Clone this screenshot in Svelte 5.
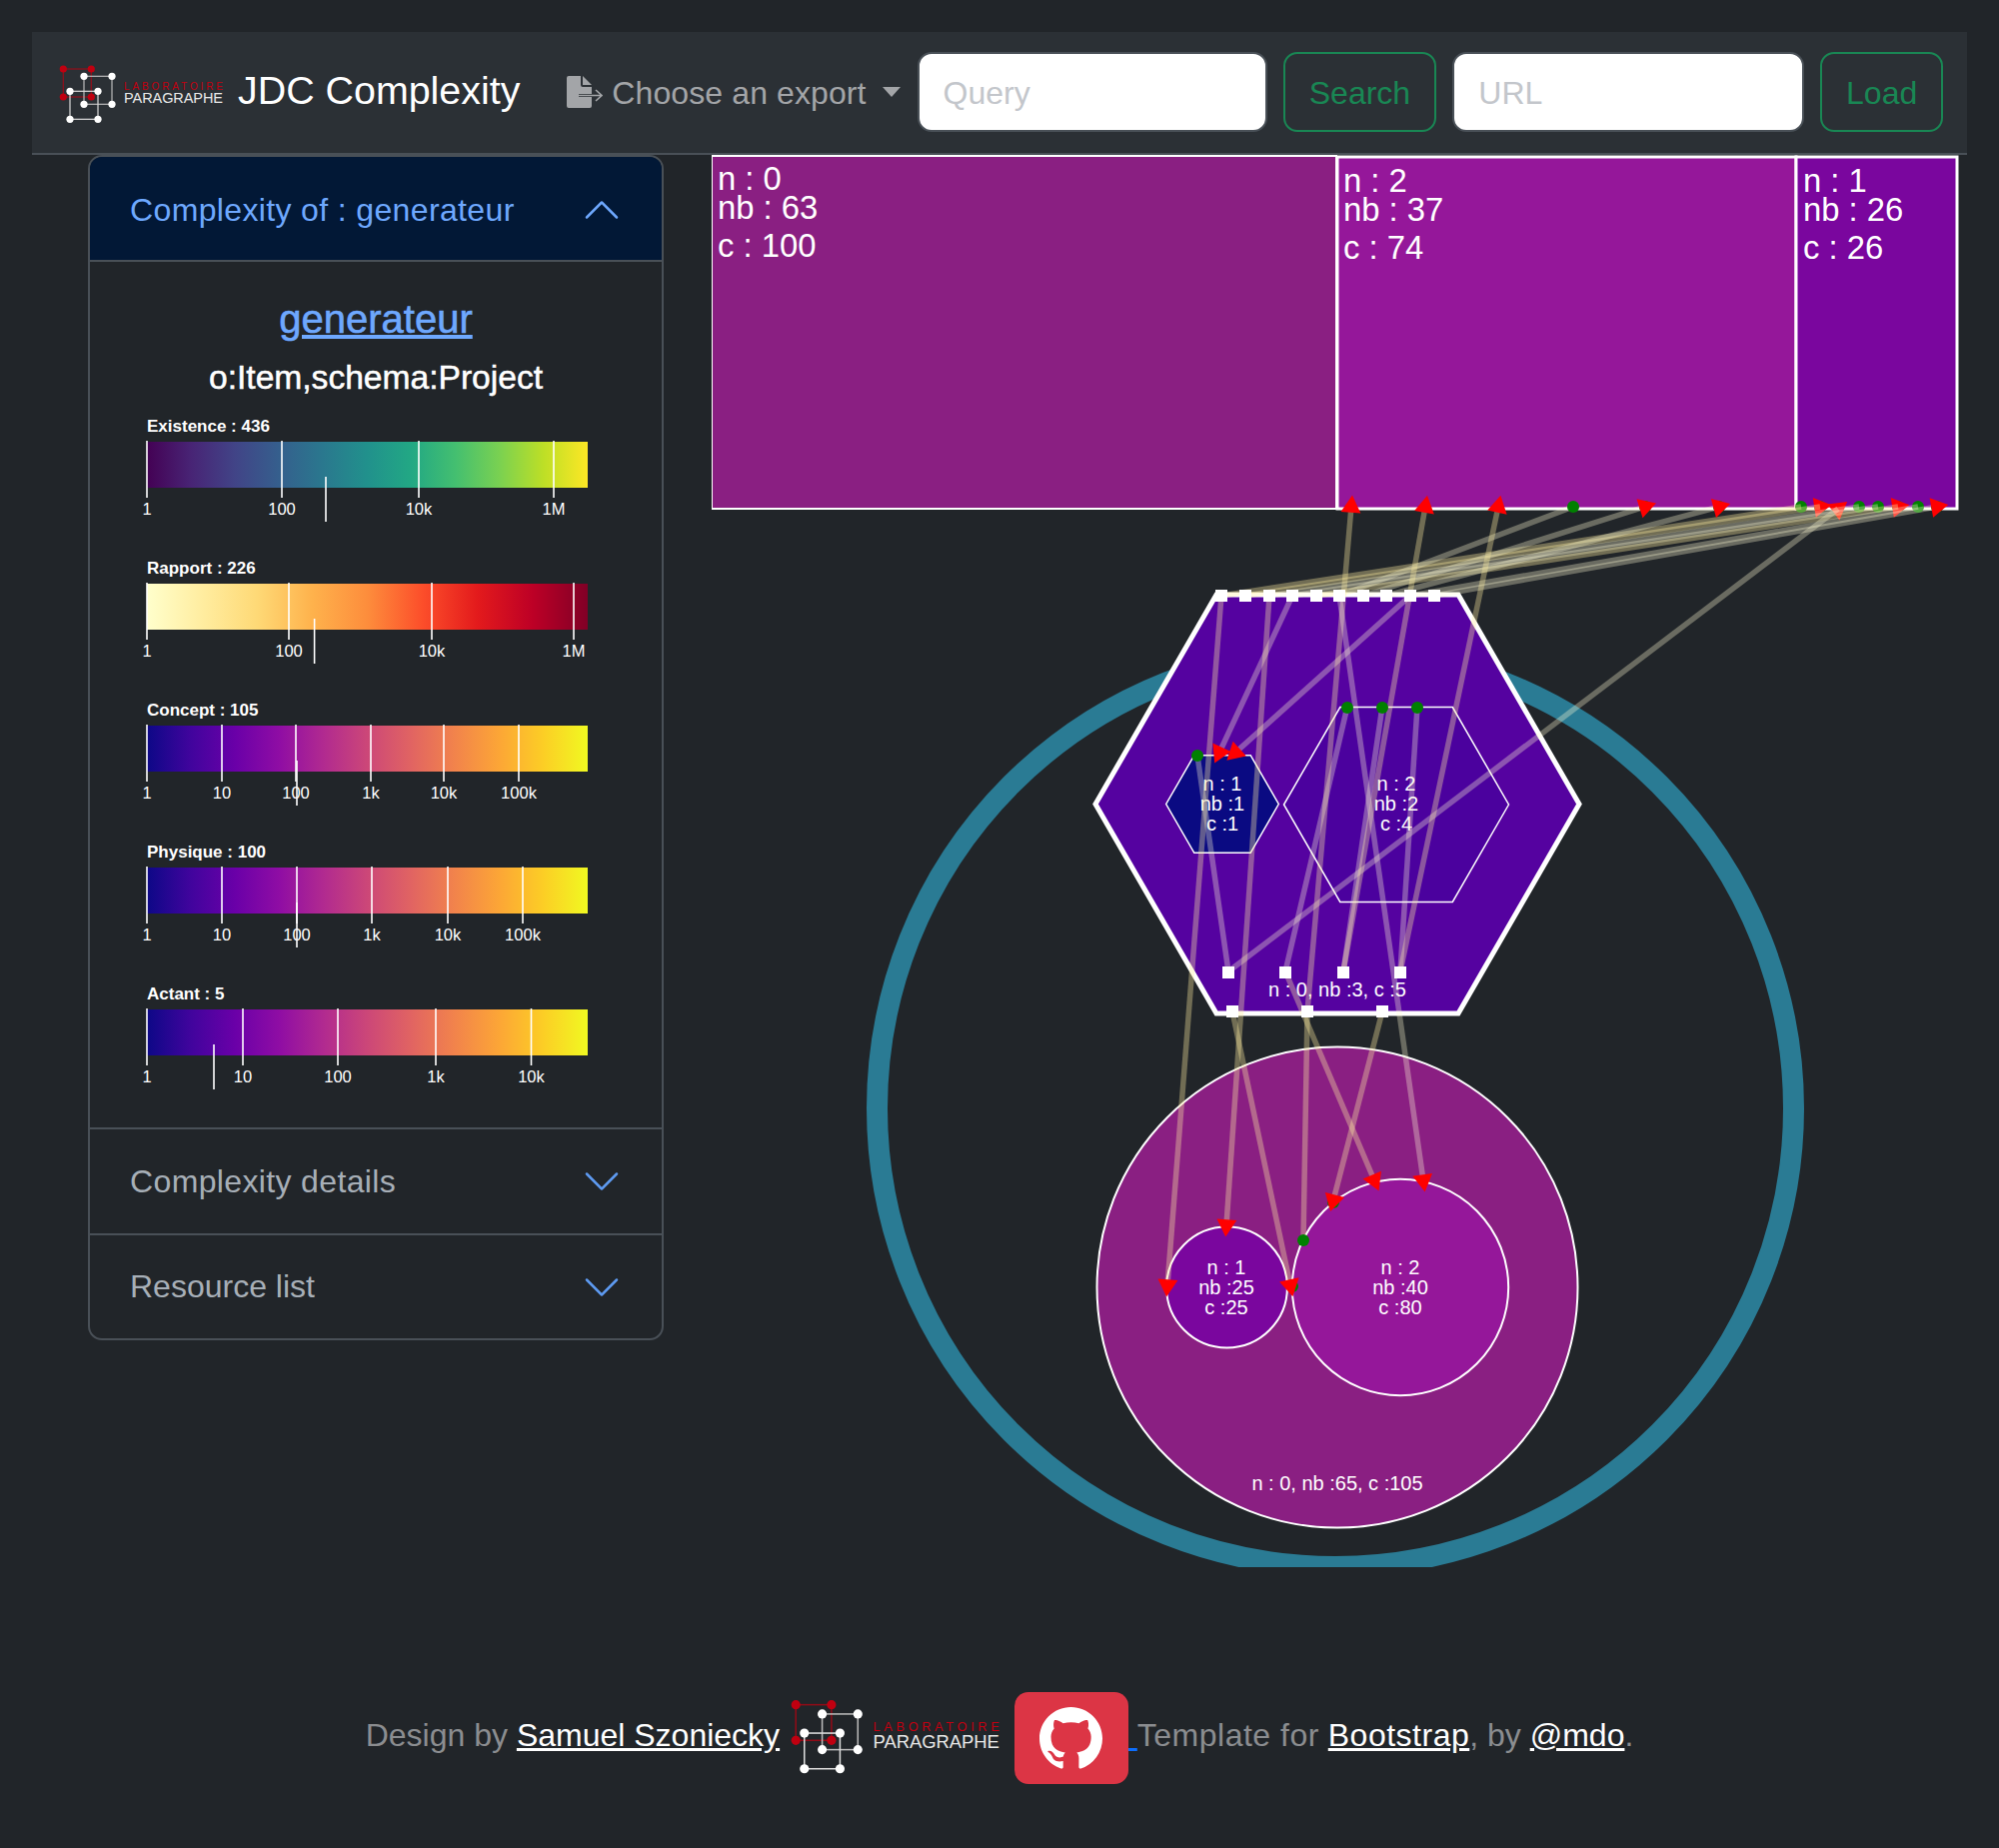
<script>
	const red = '#c00010';

	const legends = [
		{ title: 'Existence : 436', grad: 'viridis', mark: 326, ticks: [[147, '1'], [282, '100'], [419, '10k'], [554, '1M']] },
		{ title: 'Rapport : 226', grad: 'ylorrd', mark: 314.6, ticks: [[147, '1'], [289, '100'], [432, '10k'], [574, '1M']] },
		{ title: 'Concept : 105', grad: 'plasma', mark: 297, ticks: [[147, '1'], [222, '10'], [296, '100'], [371, '1k'], [444, '10k'], [519, '100k']] },
		{ title: 'Physique : 100', grad: 'plasma', mark: 297, ticks: [[147, '1'], [222, '10'], [297, '100'], [372, '1k'], [448, '10k'], [523, '100k']] },
		{ title: 'Actant : 5', grad: 'plasma', mark: 214, ticks: [[147, '1'], [243, '10'], [338, '100'], [436, '1k'], [531.5, '10k']] }
	];

	const gradients = {
		viridis: ['#440154', '#482475', '#414487', '#355f8d', '#2a788e', '#21918c', '#22a884', '#44bf70', '#7ad151', '#bddf26', '#fde725'],
		ylorrd: ['#ffffcc', '#ffeda0', '#fed976', '#feb24c', '#fd8d3c', '#fc4e2a', '#e31a1c', '#bd0026', '#800026'],
		plasma: ['#0d0887', '#41049d', '#6a00a8', '#8f0da4', '#b12a90', '#cc4778', '#e16462', '#f2844b', '#fca636', '#fcce25', '#f0f921']
	};

	const rects = [
		{ x: 712, y: 156, w: 625, h: 353, fill: '#8a1f82', sw: 2, tx: 718, base: 190, lines: ['n : 0', 'nb : 63', 'c : 100'] },
		{ x: 1338, y: 157, w: 459, h: 352, fill: '#95179a', sw: 3, tx: 1344, base: 192, lines: ['n : 2', 'nb : 37', 'c : 74'] },
		{ x: 1797, y: 157, w: 161, h: 352, fill: '#7a069e', sw: 3, tx: 1804, base: 192, lines: ['n : 1', 'nb : 26', 'c : 26'] }
	];

	const links = [
		// fan from the top of the hexagon to the treemap
		[1222, 596, 1802, 507, 1], [1246, 596, 1821, 507, 1], [1270, 596, 1860, 507, 0], [1293, 596, 1879, 507, 0],
		[1317, 596, 1899, 507, 1], [1411, 596, 1919, 507, 0], [1435, 596, 1938, 507, 0], [1340, 596, 1574, 507, 0],
		[1364, 596, 1646, 507, 0], [1387, 596, 1720, 507, 0],
		// through the hexagon
		[1229, 972, 1839, 509, 0], [1229, 972, 1198, 756, 0], [1293, 596, 1220, 753, 0], [1411, 596, 1236, 753, 0],
		[1286, 972, 1348, 707, 0], [1344, 972, 1383, 707, 0], [1401, 972, 1418, 707, 0],
		[1308, 1012, 1352, 507, 1], [1344, 972, 1426, 507, 1], [1401, 972, 1499, 507, 1],
		// down to the circles
		[1222, 596, 1168, 1286, 1], [1270, 596, 1227, 1226, 1], [1233, 1012, 1291, 1286, 1], [1308, 1012, 1304, 1241, 1],
		[1286, 972, 1375, 1181, 1], [1383, 1012, 1334, 1201, 1], [1340, 596, 1424, 1181, 0]
	];

	const lowDots = [1802, 1821, 1860, 1879, 1899, 1919];
	const highDots = [[1574, 507], [1646, 507], [1720, 507], [1938, 507], [1198, 756], [1348, 708], [1383, 708], [1418, 708], [1304, 1241], [1334, 1203], [1293, 1287]];

	const lowArrows = [[1821, 507, 1246, 596], [1899, 507, 1317, 596], [1839, 509, 1229, 972]];
	const highArrows = [
		[1352, 507, 1308, 1012], [1426, 507, 1344, 972], [1499, 507, 1401, 972], [1646, 507, 1364, 596], [1720, 507, 1387, 596], [1938, 507, 1435, 596],
		[1220, 753, 1293, 596], [1236, 753, 1411, 596],
		[1168, 1286, 1222, 596], [1227, 1226, 1270, 596], [1291, 1286, 1233, 1012], [1334, 1201, 1383, 1012], [1375, 1181, 1286, 972], [1424, 1181, 1340, 596]
	];

	const topPorts = [1222, 1246, 1270, 1293, 1317, 1340, 1364, 1387, 1411, 1435].map((x) => [x, 596]);
	const midPorts = [1229, 1286, 1344, 1401].map((x) => [x, 973]);
	const lowPorts = [1233, 1308, 1383].map((x) => [x, 1012]);

	function hex(cx, cy, r) {
		const pts = [];
		for (let i = 0; i < 6; i++) {
			const a = (i * Math.PI) / 3;
			pts.push((cx + r * Math.cos(a)).toFixed(1) + ',' + (cy + r * Math.sin(a)).toFixed(1));
		}
		return pts.join(' ');
	}

	// arrow head centred on its port, tip pointing away from where the link comes from
	function arrow(x, y, fromX, fromY) {
		const dir = Math.atan2(y - fromY, x - fromX);
		const pts = [];
		for (let i = 0; i < 3; i++) {
			const a = dir + (i * 2 * Math.PI) / 3;
			pts.push((x + 11.5 * Math.cos(a)).toFixed(1) + ',' + (y + 11.5 * Math.sin(a)).toFixed(1));
		}
		return pts.join(' ');
	}
</script>

{#snippet logo(cls)}
	<svg class={cls} viewBox="58 64 168 62" aria-label="Laboratoire Paragraphe">
		<g fill="none" stroke-width="1.2">
			<rect x="63.3" y="70" width="28" height="28" stroke={red} opacity="0.7" />
			<rect x="84" y="77.3" width="28" height="28" stroke="#bbb" />
			<rect x="70" y="92.3" width="28" height="28" stroke="#ddd" />
		</g>
		<g fill={red}>
			<circle cx="63.3" cy="70" r="3.6" /><circle cx="91.3" cy="70" r="3.6" />
			<circle cx="63.3" cy="98" r="3.6" /><circle cx="91.3" cy="98" r="3.6" />
		</g>
		<g fill="#fff">
			<circle cx="84" cy="77.3" r="3.6" /><circle cx="112" cy="77.3" r="3.6" />
			<circle cx="84" cy="105.3" r="3.6" /><circle cx="112" cy="105.3" r="3.6" />
			<circle cx="70" cy="92.3" r="3.6" /><circle cx="98" cy="92.3" r="3.6" />
			<circle cx="70" cy="120.3" r="3.6" /><circle cx="98" cy="120.3" r="3.6" />
		</g>
		<text x="124" y="91" class="logo-top" textLength="99">LABORATOIRE</text>
		<text x="124" y="104" class="logo-bottom" textLength="99">PARAGRAPHE</text>
	</svg>
{/snippet}

{#snippet chevron(up)}
	<svg class="chevron" class:up viewBox="0 0 16 16" fill="currentColor">
		<path d="M1.646 4.646a.5.5 0 0 1 .708 0L8 10.293l5.646-5.647a.5.5 0 0 1 .708.708l-6 6a.5.5 0 0 1-.708 0l-6-6a.5.5 0 0 1 0-.708z" />
	</svg>
{/snippet}

<nav class="navbar">
	{@render logo('nav-logo')}
	<span class="brand">JDC Complexity</span>
	<button class="export">
		<svg class="export-icon" viewBox="0 0 36 32">
			<path fill="currentColor" d="M2 0h12v9a2 2 0 0 0 2 2h9v7H12v3h13v9a2 2 0 0 1-2 2H2a2 2 0 0 1-2-2V2a2 2 0 0 1 2-2z" />
			<path fill="currentColor" d="M16 0l9 9h-9z" />
			<path fill="none" stroke="currentColor" stroke-width="1.6" d="M12 19.5h22M29 14l6 5.5-6 5.5" />
		</svg>
		<span class="export-label">Choose an export</span>
	</button>
	<input class="field query" placeholder="Query" />
	<button class="btn search">Search</button>
	<input class="field url" placeholder="URL" />
	<button class="btn load">Load</button>
</nav>

<main class="main">
	<section class="accordion">
		<button class="acc-head open">
			<span class="wide">Complexity of : generateur</span>
			{@render chevron(true)}
		</button>
		<div class="acc-body">
			<h4 class="res-title"><a href="#top">generateur</a></h4>
			<p class="res-types">o:Item,schema:Project</p>
			{#each legends as l, i}
				<svg class="legend" viewBox="137 0 470 142">
					<defs>
						<linearGradient id="grad{i}">
							{#each gradients[l.grad] as c, k}
								<stop offset={k / (gradients[l.grad].length - 1)} stop-color={c} />
							{/each}
						</linearGradient>
					</defs>
					<text x="147" y="27" class="leg-title">{l.title}</text>
					<rect x="147" y="37" width="441" height="46" fill="url(#grad{i})" />
					{#each l.ticks as t}
						<line x1={t[0]} x2={t[0]} y1="36" y2="93" class="tick" />
						<text x={t[0]} y="110" class="tick-label">{t[1]}</text>
					{/each}
					<line x1={l.mark} x2={l.mark} y1="72" y2="117" class="tick" />
				</svg>
			{/each}
		</div>
		<button class="acc-head middle">
			<span class="wide">Complexity details</span>
			{@render chevron(false)}
		</button>
		<button class="acc-head last">
			Resource list
			{@render chevron(false)}
		</button>
	</section>

	<svg class="diagram" viewBox="712 155 1248 1413">
		{#each rects as r}
			<rect x={r.x} y={r.y} width={r.w} height={r.h} fill={r.fill} stroke="#fff" stroke-width={r.sw} />
			<text x={r.tx} y={r.base} class="big">{r.lines[0]}</text>
			<text x={r.tx} y={r.base + 29} class="big">{r.lines[1]}</text>
			<text x={r.tx} y={r.base + 67} class="big">{r.lines[2]}</text>
		{/each}
		{#each lowDots as x}
			<circle cx={x} cy="507" r="6" class="dot" />
		{/each}
		{#each lowArrows as a}
			<polygon points={arrow(a[0], a[1], a[2], a[3])} class="head" />
		{/each}

		<circle cx="1336" cy="1109" r="458.5" class="ring" />

		<polygon points={hex(1338, 804.5, 242)} fill="#5502a0" stroke="#fff" stroke-width="5" />
		<polygon points={hex(1223, 804.5, 56.3)} fill="#0a0a82" stroke="#fff" stroke-width="1.5" />
		<polygon points={hex(1397, 805, 112.5)} fill="#4b019e" stroke="#fff" stroke-width="1.5" />
		<text x="1223" class="small" y="791">n : 1</text>
		<text x="1223" class="small" y="811">nb :1</text>
		<text x="1223" class="small" y="831">c :1</text>
		<text x="1397" class="small" y="791">n : 2</text>
		<text x="1397" class="small" y="811">nb :2</text>
		<text x="1397" class="small" y="831">c :4</text>
		<text x="1338" class="small" y="997">n : 0, nb :3, c :5</text>

		<circle cx="1338" cy="1288" r="240.5" fill="#8a1f82" stroke="#fff" stroke-width="2" />
		<circle cx="1227.5" cy="1288" r="60.4" fill="#7a069e" stroke="#fff" stroke-width="2" />
		<circle cx="1401" cy="1288" r="108.2" fill="#95179a" stroke="#fff" stroke-width="2" />
		<text x="1227" class="small" y="1275">n : 1</text>
		<text x="1227" class="small" y="1295">nb :25</text>
		<text x="1227" class="small" y="1315">c :25</text>
		<text x="1401" class="small" y="1275">n : 2</text>
		<text x="1401" class="small" y="1295">nb :40</text>
		<text x="1401" class="small" y="1315">c :80</text>
		<text x="1338" class="small" y="1491">n : 0, nb :65, c :105</text>

		{#each links as k}
			<line x1={k[0]} y1={k[1]} x2={k[2]} y2={k[3]} class="link" class:warm={k[4]} />
		{/each}

		{#each [...topPorts, ...midPorts, ...lowPorts] as p}
			<rect x={p[0] - 6} y={p[1] - 6} width="12" height="12" fill="#fff" />
		{/each}
		{#each highDots as d}
			<circle cx={d[0]} cy={d[1]} r="6" class="dot" />
		{/each}
		{#each highArrows as a}
			<polygon points={arrow(a[0], a[1], a[2], a[3])} class="head" />
		{/each}
	</svg>
</main>

<footer class="footer">
	<p>
		Design by <a class="plain" href="#top">Samuel Szoniecky</a>
		<a class="plain" href="#top">{@render logo('foot-logo')}</a>
		<a class="gh-link" href="#top">{' '}<span class="gh">
				<svg viewBox="0 0 16 16" fill="#fff">
					<path d="M8 0C3.58 0 0 3.58 0 8c0 3.54 2.29 6.53 5.47 7.59.4.07.55-.17.55-.38 0-.19-.01-.82-.01-1.49-2.01.37-2.53-.49-2.69-.94-.09-.23-.48-.94-.82-1.13-.28-.15-.68-.52-.01-.53.63-.01 1.08.58 1.23.82.72 1.21 1.87.87 2.33.66.07-.52.28-.87.51-1.07-1.78-.2-3.64-.89-3.64-3.95 0-.87.31-1.59.82-2.15-.08-.2-.36-1.02.08-2.12 0 0 .67-.21 2.2.82.64-.18 1.32-.27 2-.27.68 0 1.36.09 2 .27 1.53-1.04 2.2-.82 2.2-.82.44 1.1.16 1.92.08 2.12.51.56.82 1.27.82 2.15 0 3.07-1.87 3.75-3.65 3.95.29.25.54.73.54 1.48 0 1.07-.01 1.93-.01 2.2 0 .21.15.46.55.38A8.013 8.013 0 0016 8c0-4.42-3.58-8-8-8z" />
				</svg>
			</span>{' '}</a><span class="spread">Template for</span> <a class="plain spread" href="#top">Bootstrap</a>, by <a class="plain" href="#top">@mdo</a>.
	</p>
</footer>

<style>
	:global(body) {
		background: #212529;
		font-family: 'Liberation Sans', Arial, sans-serif;
		color: #fff;
	}

	button,
	input {
		font-family: inherit;
		font-size: 32px;
	}

	.navbar {
		box-sizing: border-box;
		display: flex;
		align-items: center;
		height: 123px;
		margin: 32px 32px 0;
		padding: 0 24px 2px 26px;
		background: #2b3035;
		border-bottom: 2px solid #495057;
	}

	.nav-logo {
		width: 168px;
		height: 62px;
		flex: none;
		margin-top: 4px;
	}

	.brand {
		margin: -2px 0 0 12px;
		font-size: 39.4px;
		white-space: nowrap;
	}

	.export {
		display: flex;
		align-items: center;
		margin-left: 47px;
		padding: 0;
		width: 351px;
		background: none;
		border: 0;
		color: #a3a5a8;
		white-space: nowrap;
	}

	.export::after {
		content: '';
		margin-left: 16px;
		border-top: 10px solid currentColor;
		border-left: 9px solid transparent;
		border-right: 9px solid transparent;
	}

	.export-icon {
		width: 36px;
		height: 32px;
		margin-right: 9px;
	}

	.export-label {
		padding-top: 4px;
		letter-spacing: 0.1px;
	}

	.field {
		box-sizing: border-box;
		height: 80px;
		padding: 4px 24px 0;
		background: #fff;
		border: 2px solid #495057;
		border-radius: 14px;
		outline: none;
	}

	.field::placeholder {
		color: #c3c6cb;
		opacity: 1;
	}

	.query {
		width: 350px;
	}

	.url {
		width: 352px;
	}

	.btn {
		height: 80px;
		padding: 4px 0 0;
		background: none;
		border: 2px solid #198754;
		border-radius: 14px;
		color: #198754;
	}

	.search {
		width: 154px;
		margin: 0 16px 0 16px;
	}

	.load {
		width: 123px;
		margin-left: 16px;
	}

	.main {
		display: flex;
		align-items: flex-start;
	}

	.accordion {
		box-sizing: border-box;
		width: 576px;
		margin-left: 88px;
		border: 2px solid #495057;
		border-radius: 14px;
		overflow: hidden;
		display: flex;
		flex-direction: column;
	}

	.acc-head {
		display: flex;
		align-items: center;
		justify-content: space-between;
		height: 105px;
		padding: 0 40px;
		background: none;
		border: 0;
		border-top: 2px solid #495057;
		color: #a7afb7;
		text-align: left;
	}

	.acc-head.open {
		height: 105px;
		padding-top: 3px;
		border-top: 0;
		border-bottom: 2px solid #495057;
		background: #021836;
		color: #6ea8fe;
	}

	.acc-head.middle {
		height: 106px;
	}

	.wide {
		letter-spacing: 0.36px;
	}

	.chevron {
		width: 40px;
		height: 40px;
		color: #5e9bf2;
	}

	.chevron.up {
		transform: rotate(180deg);
		color: #6ea8fe;
	}

	.acc-body {
		padding-top: 33px;
		height: 833px;
		box-sizing: content-box;
		text-align: center;
	}

	.res-title {
		margin: 0;
		font-size: 40px;
		line-height: 48px;
		font-weight: 400;
		-webkit-text-stroke: 0.6px #6ea8fe;
	}

	.res-title a {
		color: #6ea8fe;
	}

	.res-types {
		margin: 16px 0 8px;
		font-size: 33.6px;
		line-height: 38px;
		-webkit-text-stroke: 0.5px #fff;
	}

	.legend {
		display: block;
		width: 470px;
		height: 142px;
		margin-left: 47px;
	}

	.leg-title {
		font-size: 17px;
		font-weight: 700;
		fill: #fff;
	}

	.tick {
		stroke: #fff;
		stroke-width: 1.6;
	}

	.tick-label {
		font-size: 16.5px;
		fill: #fff;
		text-anchor: middle;
	}

	.diagram {
		display: block;
		width: 1248px;
		height: 1413px;
		margin-left: 48px;
		flex: none;
	}

	.big {
		font-size: 32.8px;
		fill: #fff;
	}

	.small {
		font-size: 20px;
		fill: #fff;
		text-anchor: middle;
	}

	.ring {
		fill: none;
		stroke: #2a7b94;
		stroke-width: 21;
	}

	.link {
		stroke: #fffbd6;
		stroke-width: 5.5;
		stroke-opacity: 0.33;
	}

	.link.warm {
		stroke: #ffeea0;
		stroke-opacity: 0.36;
	}

	.dot {
		fill: #008000;
	}

	.head {
		fill: #f00;
	}

	.footer {
		padding-top: 125px;
		text-align: center;
	}

	.footer p {
		margin: 0;
		font-size: 32px;
		color: #8b8d90;
	}

	.plain {
		color: #fff;
	}

	.spread {
		letter-spacing: 0.5px;
	}

	.foot-logo {
		width: 215px;
		height: 79px;
		margin-right: 2px;
		vertical-align: -30px;
	}

	.gh-link {
		color: #0d6efd;
	}

	.gh {
		display: inline-flex;
		align-items: center;
		justify-content: center;
		box-sizing: border-box;
		width: 114px;
		height: 92px;
		background: #dc3545;
		border-radius: 14px;
		vertical-align: -24px;
	}

	.gh svg {
		width: 63px;
		height: 63px;
	}

	.logo-top {
		font-size: 10px;
		fill: #c00010;
	}

	.logo-bottom {
		font-size: 14.5px;
		fill: #e8e8e8;
	}
</style>
